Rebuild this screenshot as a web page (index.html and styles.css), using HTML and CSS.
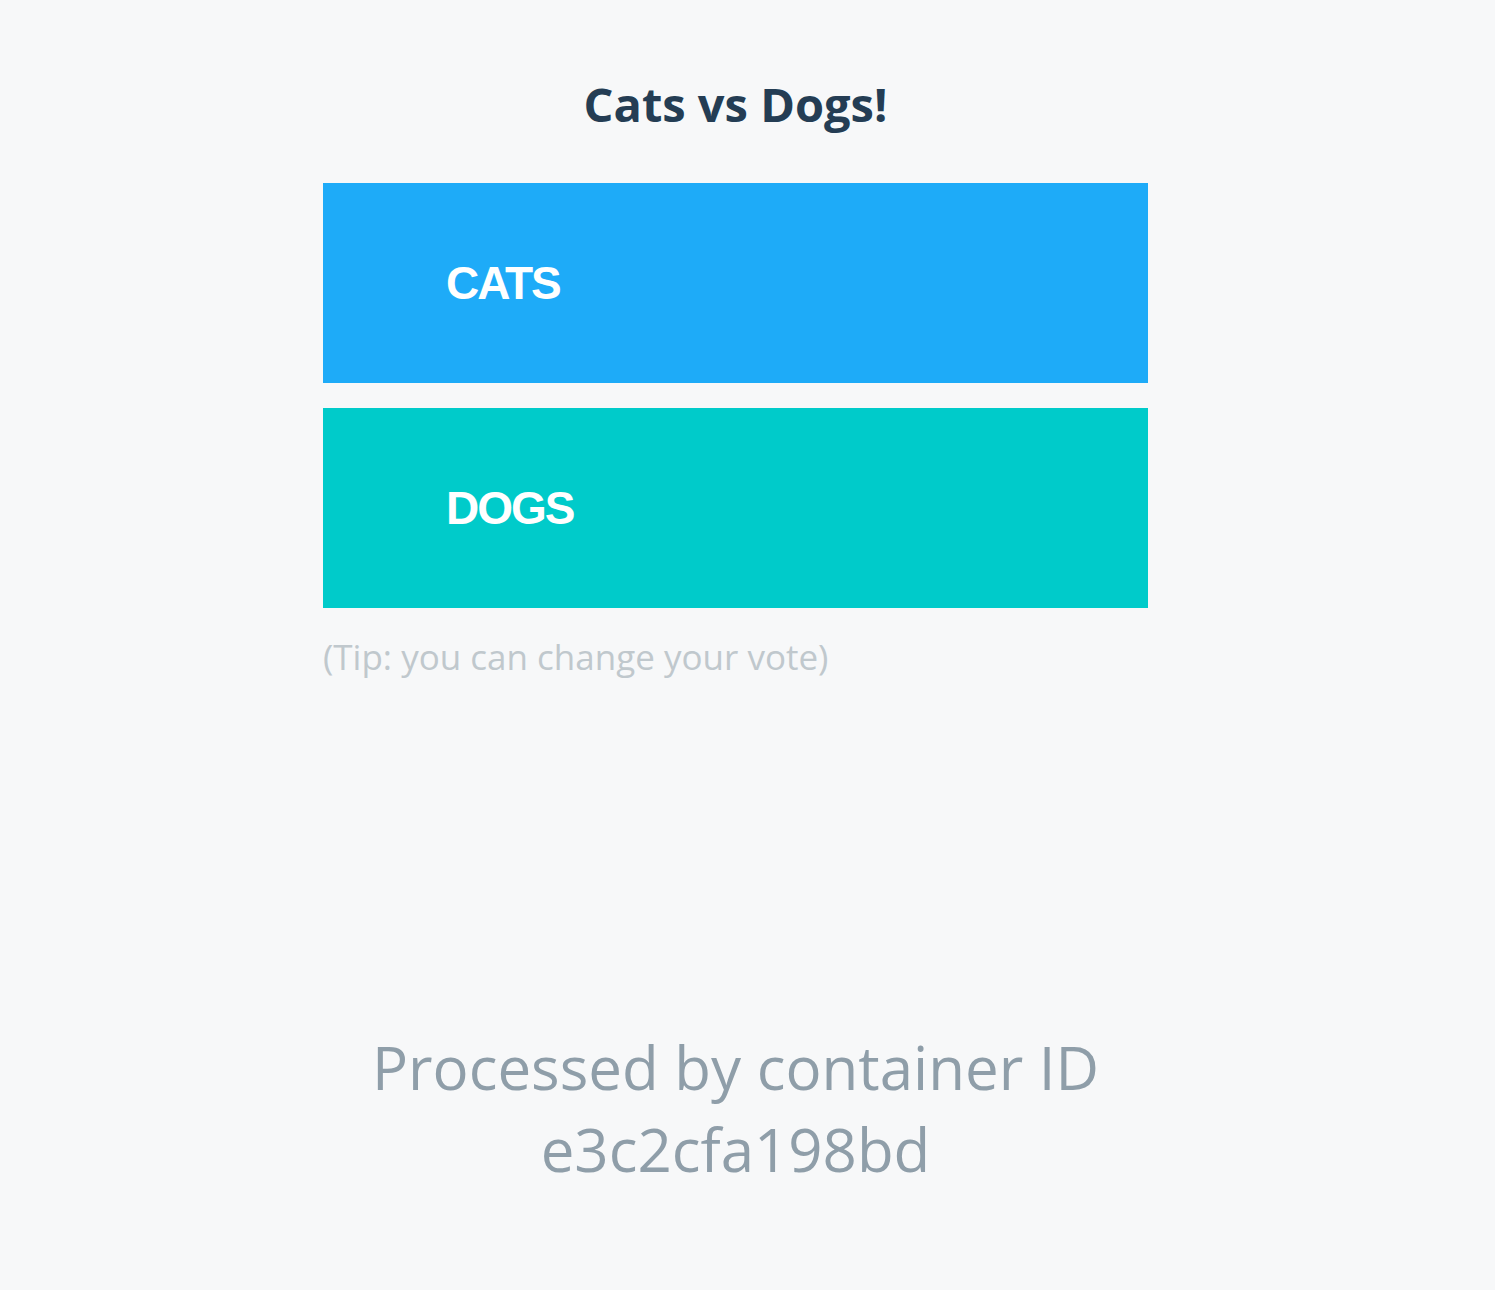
FILE: index.html
```html
<!DOCTYPE html>
<html>
<head>
<meta charset="utf-8">
<title>Cats vs Dogs!</title>
<link rel="stylesheet" href="styles.css">
</head>
<body>
<div class="page">
  <div class="content">
    <h3 class="title">Cats vs Dogs!</h3>
    <form class="choices">
      <button type="button" class="choice choice-a">CATS</button>
      <button type="button" class="choice choice-b">DOGS</button>
    </form>
    <p class="tip">(Tip: you can change your vote)</p>
  </div>
  <div class="hostname">Processed by container ID<br>e3c2cfa198bd</div>
</div>
</body>
</html>
```
FILE: styles.css
```css
html, body {
  margin: 0;
  padding: 0;
  background: #f7f8f9;
}
body {
  font-family: "Open Sans", "Liberation Sans", sans-serif;
}
.page {
  width: 1471px;
  display: flex;
  flex-direction: column;
  align-items: center;
}
.content {
  width: 825px;
  display: flex;
  flex-direction: column;
  padding-top: 73px;
}
.title {
  margin: 0 0 48px;
  font-size: 47px;
  line-height: 62px;
  font-weight: 700;
  color: #243d54;
  text-align: center;
}
.choices {
  display: flex;
  flex-direction: column;
  gap: 25px;
  margin: 0;
}
.choice {
  height: 200px;
  border: 0;
  margin: 0;
  padding: 0 0 0 123px;
  text-align: left;
  color: #ffffff;
  font-family: "Liberation Sans", Arial, sans-serif;
  font-weight: 700;
  font-size: 46px;
  letter-spacing: -2px;
  cursor: pointer;
}
.choice-a { background: #1eabf8; }
.choice-b { background: #00cbca; }
.tip {
  margin: 24px 0 0;
  font-size: 35px;
  line-height: 50px;
  color: #c0c8cd;
}
.hostname {
  margin-top: 344px;
  font-size: 60px;
  line-height: 82px;
  color: #8f9ea9;
  text-align: center;
}
```
